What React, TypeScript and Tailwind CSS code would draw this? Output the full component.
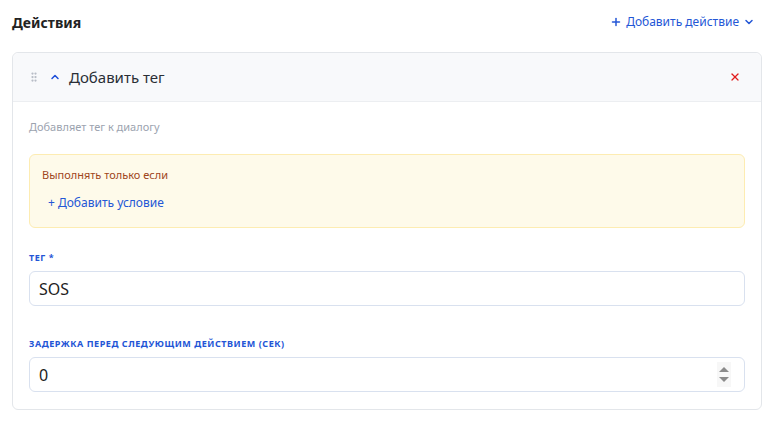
import { ChevronDown, ChevronUp, GripVertical, Plus, X } from "lucide-react";

function FieldLabel({ children }: { children: React.ReactNode }) {
  return (
    <div className="text-[9px] font-bold uppercase tracking-[0.06em] text-[#2355d6] leading-[12px]">
      {children}
    </div>
  );
}

export default function App() {
  return (
    <div className="w-[780px] h-[421px] bg-white pl-3 pr-[18px] pt-[10px] font-['Noto_Sans',sans-serif] text-[#1f2937]">
      <div className="flex items-center justify-between h-6">
        <h2 className="text-[14px] font-bold text-[#222]">Действия</h2>
        <button type="button" className="flex items-center gap-1 text-[12px] text-[#2457d6] pr-[7px]">
          <Plus className="w-3 h-3" strokeWidth={3} />
          Добавить действие
          <ChevronDown className="w-3 h-3" strokeWidth={3} />
        </button>
      </div>

      <div className="mt-[18px] border border-[#e3e6ea] rounded-md">
        <div className="h-[49px] flex items-center bg-[#f8f9fb] border-b border-[#eceef1] rounded-t-md pl-[15px] pr-5">
          <GripVertical className="w-3 h-3 text-[#b6bcc5]" strokeWidth={2.5} />
          <ChevronUp className="w-3 h-3 ml-[9px] text-[#1d4ed8]" strokeWidth={3} />
          <span className="ml-[8px] text-[15px] text-[#2a2f36]">Добавить тег</span>
          <X className="ml-auto w-3 h-3 text-[#e11d1d]" strokeWidth={2.5} />
        </div>

        <div className="px-4 pt-[17px] pb-[17px]">
          <p className="text-[11px] leading-4 text-[#9ca3af]">Добавляет тег к диалогу</p>

          <div className="mt-[19px] h-[74px] border border-[#fdecb2] bg-[#fefaea] rounded-md px-3 pt-[12px]">
            <div className="text-[11px] leading-4 text-[#a0461c]">Выполнять только если</div>
            <button type="button" className="mt-[12px] px-[6px] text-[12px] leading-4 text-[#2457d6]">
              + Добавить условие
            </button>
          </div>

          <div className="mt-6">
            <FieldLabel>Тег *</FieldLabel>
            <div className="mt-[7px] h-[35px] border border-[#d9e1ef] rounded-md flex items-center px-[9px] text-[16px] text-[#222]">
              SOS
            </div>
          </div>

          <div className="mt-[32px]">
            <FieldLabel>Задержка перед следующим действием (сек)</FieldLabel>
            <div className="mt-[7px] h-[35px] border border-[#d9e1ef] rounded-md flex items-center pl-[9px] pr-[13px] text-[16px] text-[#222]">
              <span>0</span>
              <div className="ml-auto w-[14px] h-[25px] bg-[#f7f7f7] flex flex-col items-center justify-center gap-[5px]">
                <div className="w-0 h-0 border-x-[5px] border-x-transparent border-b-[5px] border-b-[#8a8a8a]" />
                <div className="w-0 h-0 border-x-[5px] border-x-transparent border-t-[5px] border-t-[#8a8a8a]" />
              </div>
            </div>
          </div>
        </div>
      </div>
    </div>
  );
}
